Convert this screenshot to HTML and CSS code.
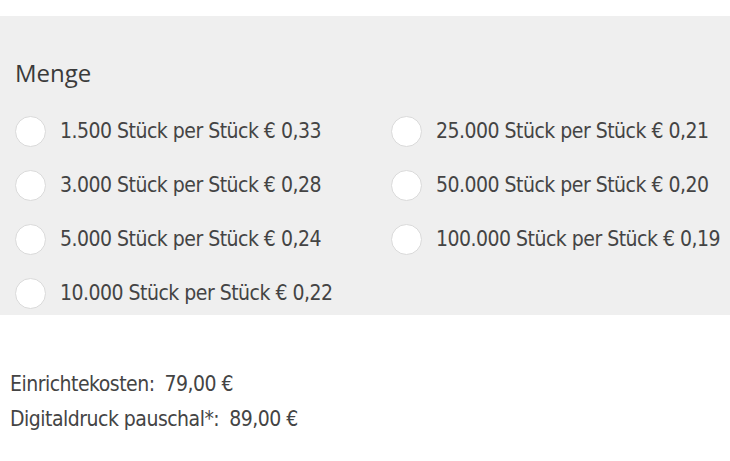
FILE: index.html
```html
<!DOCTYPE html>
<html lang="de">
<head>
    <meta charset="UTF-8">
    <meta name="viewport" content="width=device-width, initial-scale=1.0">
    <title>Menge</title>
    <link rel="stylesheet" href="styles.css">
</head>
<body>

<div class="quantity-box">
    <h3>Menge</h3>
    <div class="options">
        <label class="option"><input type="radio" name="menge"><span class="dot"></span>1.500 Stück per Stück € 0,33</label>
        <label class="option"><input type="radio" name="menge"><span class="dot"></span>3.000 Stück per Stück € 0,28</label>
        <label class="option"><input type="radio" name="menge"><span class="dot"></span>5.000 Stück per Stück € 0,24</label>
        <label class="option"><input type="radio" name="menge"><span class="dot"></span>10.000 Stück per Stück € 0,22</label>
        <label class="option"><input type="radio" name="menge"><span class="dot"></span>25.000 Stück per Stück € 0,21</label>
        <label class="option"><input type="radio" name="menge"><span class="dot"></span>50.000 Stück per Stück € 0,20</label>
        <label class="option"><input type="radio" name="menge"><span class="dot"></span>100.000 Stück per Stück € 0,19</label>
    </div>
</div>

<div class="costs">
    <p>Einrichtekosten:<span class="price">79,00 €</span></p>
    <p>Digitaldruck pauschal*:<span class="price">89,00 €</span></p>
</div>

</body>
</html>
```

FILE: styles.css
```css
    body {
        margin: 0;
        font-family: 'DejaVu Sans Condensed', 'DejaVu Sans', Arial, sans-serif;
        font-stretch: condensed;
        color: #444;
        background: #fff;
    }
    .quantity-box {
        margin-top: 16px;
        background-color: #efefef;
        padding: 42px 0 7px 15px;
    }
    .quantity-box h3 {
        margin: 0 0 28px 0;
        font-family: 'Open Sans', Arial, sans-serif;
        font-stretch: normal;
        font-weight: 400;
        font-size: 24px;
        line-height: 30px;
        color: #3a3a3a;
    }
    .options {
        display: grid;
        grid-template-columns: 376px auto;
        grid-template-rows: repeat(4, 30px);
        grid-auto-flow: column;
        row-gap: 24px;
    }
    .option {
        display: flex;
        align-items: center;
        font-size: 21px;
        letter-spacing: -0.5px;
        white-space: nowrap;
        cursor: pointer;
    }
    .option input {
        display: none;
    }
    .dot {
        width: 29px;
        height: 29px;
        border: 1px solid #dadada;
        border-radius: 50%;
        background: #fff;
        margin-right: 14px;
        flex-shrink: 0;
    }
    .costs {
        padding: 52px 10px 0 10px;
        font-size: 21px;
        letter-spacing: -0.5px;
    }
    .costs p {
        margin: 0;
        line-height: 35px;
    }
    .price {
        margin-left: 10px;
    }
```
